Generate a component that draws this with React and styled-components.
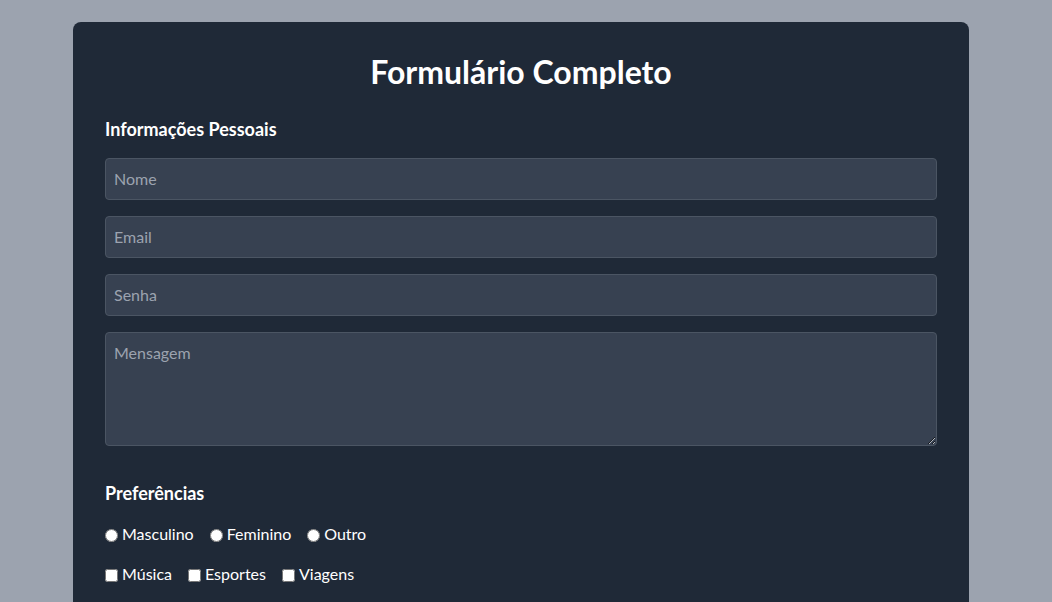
import React from "react";
import styled, { createGlobalStyle } from "styled-components";

const GlobalStyle = createGlobalStyle`
  html, body {
    margin: 0;
    padding: 0;
    background-color: #9ca3af;
    font-family: Lato, "Open Sans", sans-serif;
    font-size: 16px;
    line-height: 24px;
  }
  * {
    box-sizing: border-box;
  }
`;

const Page = styled.div`
  display: flex;
  justify-content: center;
  padding: 22px 10px 0 0;
  min-height: 100vh;
`;

const Card = styled.form`
  width: 896px;
  background-color: #1f2937;
  border-radius: 8px;
  padding: 32px;
  color: #fff;
`;

const Title = styled.h1`
  margin: 0 0 24px;
  text-align: center;
  font-size: 32px;
  line-height: 36px;
  font-weight: 700;
`;

const Section = styled.section`
  margin-bottom: ${({ $gap }) => $gap || 0}px;
`;

const SectionTitle = styled.h2`
  margin: 0 0 16px;
  padding-top: ${({ $shift }) => $shift || 0}px;
  height: 28px;
  font-size: 18px;
  line-height: 28px;
  font-weight: 700;
`;

const Input = styled.input`
  display: block;
  width: 100%;
  height: 42px;
  margin: 0 0 16px;
  padding: 7px 8px 9px;
  font: inherit;
  color: #fff;
  background-color: #374151;
  border: 1px solid #4b5563;
  border-radius: 4px;
  outline: none;

  &::placeholder {
    color: #9ca3af;
  }
`;

const TextArea = styled.textarea`
  display: block;
  width: 100%;
  height: 114px;
  margin: 0;
  padding: 8px;
  font: inherit;
  color: #fff;
  background-color: #374151;
  border: 1px solid #4b5563;
  border-radius: 4px;
  outline: none;
  resize: vertical;

  &::placeholder {
    color: #9ca3af;
  }
`;

const OptionRow = styled.div`
  display: flex;
  align-items: center;
  gap: 16px;
  margin-bottom: 16px;
`;

const Option = styled.label`
  display: flex;
  align-items: center;
  gap: 4px;
  font-size: 16px;
  line-height: 24px;

  input {
    margin: 0;
    width: 13px;
    height: 13px;
  }

  span {
    position: relative;
    top: -1px;
  }
`;

export default function App() {
  return (
    <>
      <GlobalStyle />
      <Page>
        <Card onSubmit={(e) => e.preventDefault()}>
          <Title>Formulário Completo</Title>

          <Section $gap={33}>
            <SectionTitle $shift={1}>Informações Pessoais</SectionTitle>
            <Input type="text" placeholder="Nome" />
            <Input type="email" placeholder="Email" />
            <Input type="password" placeholder="Senha" />
            <TextArea rows={4} placeholder="Mensagem" />
          </Section>

          <Section>
            <SectionTitle>Preferências</SectionTitle>
            <OptionRow>
              <Option>
                <input type="radio" name="genero" /> <span>Masculino</span>
              </Option>
              <Option>
                <input type="radio" name="genero" /> <span>Feminino</span>
              </Option>
              <Option>
                <input type="radio" name="genero" /> <span>Outro</span>
              </Option>
            </OptionRow>
            <OptionRow>
              <Option>
                <input type="checkbox" /> <span>Música</span>
              </Option>
              <Option>
                <input type="checkbox" /> <span>Esportes</span>
              </Option>
              <Option>
                <input type="checkbox" /> <span>Viagens</span>
              </Option>
            </OptionRow>
          </Section>
        </Card>
      </Page>
    </>
  );
}
